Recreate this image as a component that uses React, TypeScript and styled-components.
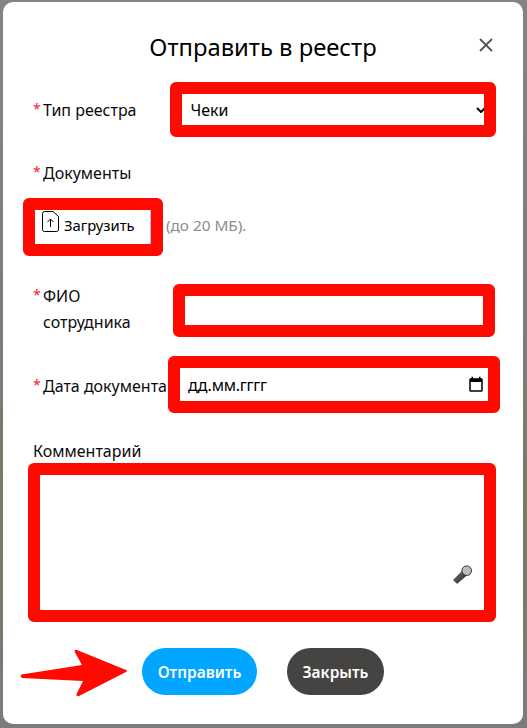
import styled, { createGlobalStyle } from "styled-components"

const chevron = encodeURIComponent(
    '<svg xmlns="http://www.w3.org/2000/svg" width="10" height="6" viewBox="0 0 10 6"><path d="M1 1 L5 5 L9 1" fill="none" stroke="#000" stroke-width="2"/></svg>'
)

const Global = createGlobalStyle`
    html, body {
        margin: 0;
        padding: 0;
        background: #808080;
    }
    * {
        box-sizing: border-box;
    }
`

const Page = styled.div`
    width: 527px;
    height: 728px;
    padding: 2px 4px 4px 3px;
    overflow: hidden;
    background: linear-gradient(180deg, #848484 0%, #7c7c7c 45%, #737d62 70%, #7b7b7b 100%);
`

const Dialog = styled.div`
    position: relative;
    display: flex;
    flex-direction: column;
    height: 722px;
    padding: 27px 0 0 0;
    background: #fff;
    border-radius: 10px;
    font-family: "Noto Sans", sans-serif;
    color: #0b0b0b;
`

const Title = styled.h2`
    margin: 0 0 17px 0;
    font-size: 23.8px;
    font-weight: 400;
    line-height: 36px;
    text-align: center;
    color: #000;
`

const CloseIcon = styled.button`
    position: absolute;
    top: 36px;
    right: 30px;
    width: 14px;
    height: 14px;
    padding: 0;
    border: 0;
    background: none;
    display: flex;
`

const Row = styled.div<{ $top: number; $left: number }>`
    display: flex;
    align-items: center;
    margin-top: ${(p) => p.$top}px;
    padding-left: 30px;
    & > :last-child {
        margin-left: ${(p) => p.$left}px;
    }
`

const Label = styled.label<{ $shift?: number }>`
    display: flex;
    font-size: 16px;
    line-height: 26px;
    margin-top: ${(p) => p.$shift ?? 0}px;
`

const Star = styled.span`
    width: 10px;
    color: #f5222d;
    font-size: 14px;
    line-height: 24px;
`

const Select = styled.select`
    appearance: none;
    width: 326px;
    height: 55px;
    border: 12px solid #fe0a00;
    border-radius: 6px;
    padding: 0 0 0 9px;
    background: #fff url("data:image/svg+xml,${chevron}") no-repeat right -2px center;
    font: 400 16px "Noto Sans", sans-serif;
    color: #000;
    outline: none;
`

const UploadRow = styled.div`
    display: flex;
    align-items: center;
    margin: 12px 0 0 20px;
`

const UploadButton = styled.button`
    display: flex;
    align-items: center;
    width: 140px;
    height: 58px;
    border: 12px solid #fe0a00;
    border-radius: 6px;
    padding: 0 0 4px 7px;
    gap: 5px;
    background: #fff;
    font: 400 14.8px "Noto Sans", sans-serif;
    color: #000;
    box-shadow: inset -1px 0 0 #c4c4c4;

    svg {
        align-self: flex-start;
        margin-top: 1px;
    }
`

const Hint = styled.span`
    margin: 0 0 4px 3px;
    font-size: 15.3px;
    color: #8c8c8c;
`

const TextField = styled.input`
    width: 322px;
    height: 53px;
    border: 12px solid #fe0a00;
    border-radius: 6px;
    background: #fff;
    outline: none;
`

const DateField = styled.div`
    display: flex;
    align-items: center;
    justify-content: space-between;
    width: 332px;
    height: 57px;
    border: 12px solid #fe0a00;
    border-radius: 6px;
    padding: 0 3px 0 8px;
    background: #fff;
    font-size: 16px;
    letter-spacing: -0.25px;
    color: #000;
`

const CommentLabel = styled.div`
    margin: 28px 0 2px 30px;
    font-size: 16px;
    line-height: 20px;
`

const CommentBox = styled.div`
    position: relative;
    width: 468px;
    height: 159px;
    margin: 0 0 0 25px;
    border: 12px solid #fe0a00;
    border-radius: 6px;
    background: #fff;
`

const Mic = styled.svg`
    position: absolute;
    right: 11px;
    bottom: 26px;
`

const Footer = styled.div`
    display: flex;
    align-items: center;
    margin-top: 24px;
    padding-left: 15px;
`

const Arrow = styled.svg`
    margin-right: 15px;
`

const PillButton = styled.button<{ $bg: string; $w: number }>`
    width: ${(p) => p.$w}px;
    height: 47px;
    border: 0;
    border-radius: 24px;
    margin-right: 30px;
    padding: 0;
    background: ${(p) => p.$bg};
    color: #fff;
    font: 600 15.5px "Noto Sans", sans-serif;
`

export default function App() {
    return (
        <Page>
            <Global />
            <Dialog>
                <Title>Отправить в реестр</Title>
                <CloseIcon aria-label="Закрыть">
                    <svg width="14" height="14" viewBox="0 0 14 14">
                        <path d="M1 1 L13 13 M13 1 L1 13" stroke="#555" strokeWidth="1.8" />
                    </svg>
                </CloseIcon>

                <Row $top={0} $left={33}>
                    <Label>
                        <Star>*</Star>Тип реестра
                    </Label>
                    <Select defaultValue="checks">
                        <option value="checks">Чеки</option>
                    </Select>
                </Row>

                <Row $top={23} $left={0}>
                    <Label>
                        <Star>*</Star>Документы
                    </Label>
                </Row>
                <UploadRow>
                    <UploadButton>
                        <svg width="17" height="21" viewBox="0 0 17 21" fill="none" stroke="#000" strokeWidth="1">
                            <path d="M2.5 0.5 H11 L16.5 5.5 V18.5 A2 2 0 0 1 14.5 20.5 H2.5 A2 2 0 0 1 0.5 18.5 V2.5 A2 2 0 0 1 2.5 0.5 Z" />
                            <path d="M8.5 16 V8 M5.5 11 L8.5 8 L11.5 11" />
                        </svg>
                        Загрузить
                    </UploadButton>
                    <Hint>(до 20 МБ).</Hint>
                </UploadRow>

                <Row $top={28} $left={42}>
                    <Label $shift={-4}>
                        <Star>*</Star>
                        <span>
                            ФИО
                            <br />
                            сотрудника
                        </span>
                    </Label>
                    <TextField />
                </Row>

                <Row $top={19} $left={1}>
                    <Label $shift={2}>
                        <Star>*</Star>Дата документа
                    </Label>
                    <DateField>
                        дд.мм.гггг
                        <svg width="18" height="18" viewBox="0 0 24 24" fill="#000">
                            <path d="M19 3h-1V1h-2v2H8V1H6v2H5c-1.11 0-1.99.9-1.99 2L3 19c0 1.1.89 2 2 2h14c1.1 0 2-.9 2-2V5c0-1.1-.9-2-2-2zm0 16H5V8h14v11z" />
                        </svg>
                    </DateField>
                </Row>

                <CommentLabel>Комментарий</CommentLabel>
                <CommentBox>
                    <Mic width="20" height="20" viewBox="0 0 20 20">
                        <defs>
                            <linearGradient id="micHandle" x1="0" y1="0" x2="1" y2="1">
                                <stop offset="0" stopColor="#777" />
                                <stop offset="1" stopColor="#222" />
                            </linearGradient>
                        </defs>
                        <path d="M10 6.5 L14 11 L4 19.5 L0.5 16 Z" fill="url(#micHandle)" stroke="#222" strokeWidth="0.6" />
                        <circle cx="13.7" cy="6.7" r="4.8" fill="#bdbdbd" stroke="#333" strokeWidth="1" />
                    </Mic>
                </CommentBox>

                <Footer>
                    <Arrow width="109" height="51" viewBox="0 0 109 51">
                        <path
                            d="M3.5 28.5 L64 19 L56.5 5.5 Q56.5 3 59 4 L108 24 Q110 25 108 26 L61 50 Q58 51 58.5 48 L65 35 L4 32 Q1.5 30 3.5 28.5 Z"
                            fill="#fe0a00"
                        />
                    </Arrow>
                    <PillButton $bg="#00a6ff" $w={115}>Отправить</PillButton>
                    <PillButton $bg="#454442" $w={97}>Закрыть</PillButton>
                </Footer>
            </Dialog>
        </Page>
    )
}
